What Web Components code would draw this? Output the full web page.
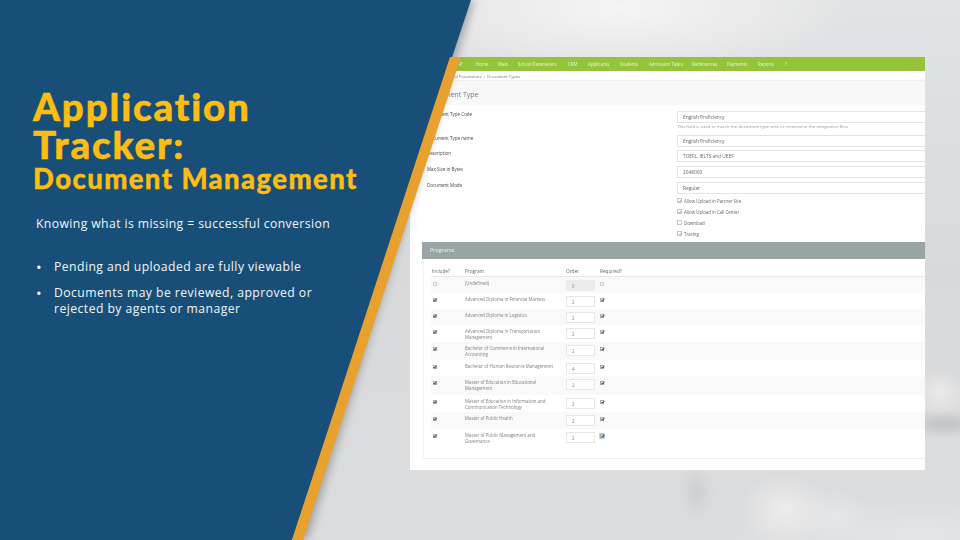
<!DOCTYPE html>
<html lang="en"><head><meta charset="utf-8"><title>Application Tracker</title>
<style>html,body{margin:0;padding:0;background:#d9dadb}</style></head>
<body>
<deck-slide>
  <slide-hero slot="hero">
    <span slot="title">Application<br>Tracker:</span>
    <span slot="sub">Document Management</span>
    <span slot="lead">Knowing what is missing = successful conversion</span>
    <li-item>Pending and uploaded are fully viewable</li-item>
    <li-item>Documents may be reviewed, approved or rejected by agents or manager</li-item>
  </slide-hero>
  <app-shot slot="shot"></app-shot>
</deck-slide>
<script>
function def(name, css, html, extra){
  class C extends HTMLElement{
    constructor(){super();const r=this.attachShadow({mode:'open'});r.innerHTML='<style>'+css+'</style>'+html;}
    connectedCallback(){if(extra)extra.call(this,this.shadowRoot);}
  }
  customElements.define(name,C);
}
def('deck-slide',`
:host{display:block;position:relative;width:960px;height:540px;overflow:hidden;
 background:
  radial-gradient(45px 36px at 785px 510px,#ececed 0,#ececed00 100%),
  radial-gradient(34px 28px at 835px 515px,#e5e6e7 0,#e5e6e700 100%),
  radial-gradient(26px 22px at 940px 393px,#ebebec 0,#ebebec00 100%),
  radial-gradient(50px 14px at 945px 424px,#c0c2c4 0,#c0c2c400 100%),
  radial-gradient(18px 30px at 697px 492px,#cecfd1 0,#cecfd100 100%),
  radial-gradient(200px 36px at 920px 535px,#e4e5e6 0,#e4e5e600 100%),
  radial-gradient(230px 70px at 620px 8px,#f5f5f5 0,#f5f5f500 100%),
  linear-gradient(180deg,#e2e3e4 0,#d8d9da 50%,#dcddde 100%);
 font-family:"Open Sans",sans-serif}
.row{display:flex;height:100%;position:relative}
.hero{display:block;width:410px;flex:none;position:relative;z-index:3}
.shot{display:block;width:515px;flex:none;padding-top:57px;position:relative;z-index:1}
svg{position:absolute;left:0;top:0;z-index:2}
`,`<svg width="960" height="540" viewBox="0 0 960 540" aria-hidden="true">
<defs><filter id="s" x="-10%" y="-10%" width="130%" height="120%"><feGaussianBlur stdDeviation="5"/></filter></defs>
<polygon points="0,0 474,0 307,540 0,540" fill="#6a6b6d" opacity=".55" filter="url(#s)"/>
<polygon points="0,0 471,0 292,540 0,540" fill="#174f78"/>
<polygon points="450,57 461,57 303,540 292,540" fill="#e8a12f"/>
</svg>
<div class="row"><div class="hero"><slot name="hero"></slot></div><div class="shot"><slot name="shot"></slot></div></div>`);

def('slide-hero',`
:host{display:block;padding:87px 0 0 33px;font-family:"Open Sans",sans-serif;color:#f4f6f8}
.t{font:900 38.5px/38px Lato,sans-serif;color:#fdbe11;letter-spacing:1.85px;-webkit-text-stroke:.5px #fdbe11}
.s{font:900 27.5px/28px Lato,sans-serif;color:#fdbe11;letter-spacing:1.4px;margin-top:2px;-webkit-text-stroke:.4px #fdbe11}
.l{font-size:12.2px;line-height:16px;margin:23px 0 0 3px;letter-spacing:.4px}
.b{margin:27px 0 0 3px;width:300px;display:flex;flex-direction:column;gap:10px}
`,`<div class="t"><slot name="title"></slot></div><div class="s"><slot name="sub"></slot></div><div class="l"><slot name="lead"></slot></div><div class="b"><slot></slot></div>`);

def('li-item',`
:host{display:flex;font-size:12.2px;line-height:16px;letter-spacing:.45px}
i{font-style:normal;width:18px;flex:none;font-size:15px}
`,`<i>•</i><span><slot></slot></span>`);

def('app-nav',`
:host{display:block;height:14px;background:#95c43b;color:#eef5df;font-size:4.4px;line-height:14px;box-sizing:border-box;width:515px;position:relative}
span{position:absolute;top:0;white-space:nowrap}
`,`<span style="left:47px">AP</span><span style="left:66px">Home</span><span style="left:88px">Main</span><span style="left:108px">School Parameters</span><span style="left:158px">CRM</span><span style="left:178px">Applicants</span><span style="left:210px">Students</span><span style="left:239px">Admission Tasks</span><span style="left:282px">Remittances</span><span style="left:317px">Payments</span><span style="left:348px">Reports</span><span style="left:375px">?</span>`);

def('form-row',`
:host{display:grid;grid-template-columns:250px 248px;padding-left:17px;box-sizing:border-box;height:var(--h,15px)}
label{font-size:4.5px;line-height:7px;color:#444}
div{box-sizing:border-box;height:var(--ih,12px);border:.5px solid #e4e4e4;border-right:0;font-size:4.8px;line-height:11px;padding-left:5px;color:#666;background:#fff;white-space:nowrap}
`,`<label></label><div></div>`,function(r){
  r.querySelector('label').textContent=this.getAttribute('label');
  r.querySelector('div').textContent=this.getAttribute('value');
});

def('check-row',`
:host{display:flex;align-items:center;gap:2px;height:11.1px;padding-left:267px;font-size:4.4px;color:#666;white-space:nowrap}
b{box-sizing:border-box;width:5px;height:5px;border:.5px solid #c9c9c9;background:#fff;display:block;position:relative}
svg{position:absolute;left:0;top:0}
`,`<b><svg width="4" height="4" viewBox="0 0 4 4"><path d="M.6 2.2 1.6 3.2 3.4 1" fill="none" stroke="#6d8a9c" stroke-width=".7"/></svg></b><span><slot></slot></span>`,function(r){
  if(this.hasAttribute('off'))r.querySelector('svg').remove();
});

def('mini-check',`
:host{display:block;box-sizing:border-box;width:4px;height:4px;background:#dedede;border:.5px solid #aaa;position:relative}
svg{position:absolute;left:-.5px;top:-.5px}
:host([off]){background:#f4f4f4;border-color:#d0d0d0}
:host([off]) svg{display:none}
:host([focus]){outline:1.2px solid #b5d2e8}
`,`<svg width="4" height="4" viewBox="0 0 4 4"><path d="M.7 2 1.6 3.1 3.4.8" fill="none" stroke="#222" stroke-width=".9"/></svg>`);

def('prog-row',`
:host{display:grid;grid-template-columns:34px 101px 34px 1fr;height:var(--h,16px);box-sizing:border-box;overflow:hidden;font-size:4.4px;line-height:6px;color:#808080;align-items:start}
:host([alt]){background:#f9f9f9}
.c{padding:4.5px 0 0 1.5px}
.p{padding:3px 13px 0 0;height:var(--ph,100%);box-sizing:border-box;overflow:hidden}
.o{box-sizing:border-box;width:29px;height:10.5px;margin-top:3px;border:.5px solid #e6e6e6;background:#fff;padding-left:5px;line-height:10px}
:host([off]) .o{background:#ececec;border-color:#ececec}
`,`<div class="c"><mini-check></mini-check></div><div class="p"></div><div class="o"></div><div class="c" style="padding-left:0"><mini-check></mini-check></div>`,function(r){
  r.querySelector('.p').textContent=this.getAttribute('name');
  r.querySelector('.o').textContent=this.getAttribute('order');
  const m=r.querySelectorAll('mini-check');
  if(this.hasAttribute('off')){m[0].setAttribute('off','');m[1].setAttribute('off','');}
  if(this.hasAttribute('focus'))m[1].setAttribute('focus','');
});

def('app-shot',`
:host{display:block;width:515px;height:413px;background:#fff;overflow:hidden;filter:blur(.55px);font-family:"Open Sans",sans-serif}
.crumb{height:10px;font-size:4.2px;line-height:11px;color:#777;padding-left:35px;border-bottom:.5px solid #eef0f0;box-sizing:border-box}
.head{height:24px;background:#f8f8f8;font-size:7px;line-height:28px;color:#777;padding-left:17px}
.form{padding-top:6px;height:137px;box-sizing:border-box}
.help{font-size:4.35px;line-height:6px;color:#999;padding-left:267px;height:12px;box-sizing:border-box;white-space:nowrap}
.checks{padding-top:1.5px}
.bar{margin-left:12px;height:17px;background:#97a5a5;color:#f1f4f4;font-size:5.4px;line-height:17px;padding-left:8px}
.outer{margin-left:13px;height:200px;border-bottom:.5px solid #eee;border-left:.5px solid #f3f3f3;box-sizing:border-box;padding-left:7px}
.th{display:grid;grid-template-columns:34px 101px 34px 1fr;height:18px;font-size:4.7px;line-height:24px;color:#666;border-bottom:.5px solid #e9e9e9;box-sizing:border-box}
.th span:first-child{padding-left:1px}
`,`<app-nav></app-nav>
<div class="crumb">School Parameters &nbsp;›&nbsp; Document Types</div>
<div class="head">Document Type</div>
<div class="form">
 <form-row label="Document Type Code" value="English Proficiency" style="--h:12px"></form-row>
 <div class="help">This field is used to match the document type sent or received in the integration files</div>
 <form-row label="Document Type name" value="English Proficiency" style="--h:15px"></form-row>
 <form-row label="Description" value="TOEFL, IELTS and UEEF" style="--h:15.5px"></form-row>
 <form-row label="Max Size in Bytes" value="2048000" style="--h:16px"></form-row>
 <form-row label="Document Mode" value="Regular" style="--h:12px"></form-row>
 <div class="checks">
 <check-row>Allow Upload in Partner Site</check-row>
 <check-row>Allow Upload in Call Center</check-row>
 <check-row off>Download</check-row>
 <check-row>Tracing</check-row>
 </div>
</div>
<div class="bar">Programs</div>
<div class="outer">
 <div class="th"><span>Include?</span><span>Program</span><span>Order</span><span>Required?</span></div>
 <prog-row alt off name="(Undefined)" order="0"></prog-row>
 <prog-row name="Advanced Diploma in Financial Markets" order="2"></prog-row>
 <prog-row alt name="Advanced Diploma in Logistics" order="2"></prog-row>
 <prog-row name="Advanced Diploma in Transportation Management" order="2" style="--h:17px"></prog-row>
 <prog-row alt name="Bachelor of Commerce in International Accounting" order="2" style="--h:18px"></prog-row>
 <prog-row name="Bachelor of Human Resource Management" order="4"></prog-row>
 <prog-row alt name="Master of Education in Educational Management" order="2" style="--h:19px"></prog-row>
 <prog-row name="Master of Education in Information and Communication Technology" order="2" style="--h:17px"></prog-row>
 <prog-row alt name="Master of Public Health" order="2" style="--h:17px"></prog-row>
 <prog-row focus name="Master of Public Management and Governance" order="2" style="--h:29px;--ph:14px"></prog-row>
</div>`);
</script>
</body></html>
